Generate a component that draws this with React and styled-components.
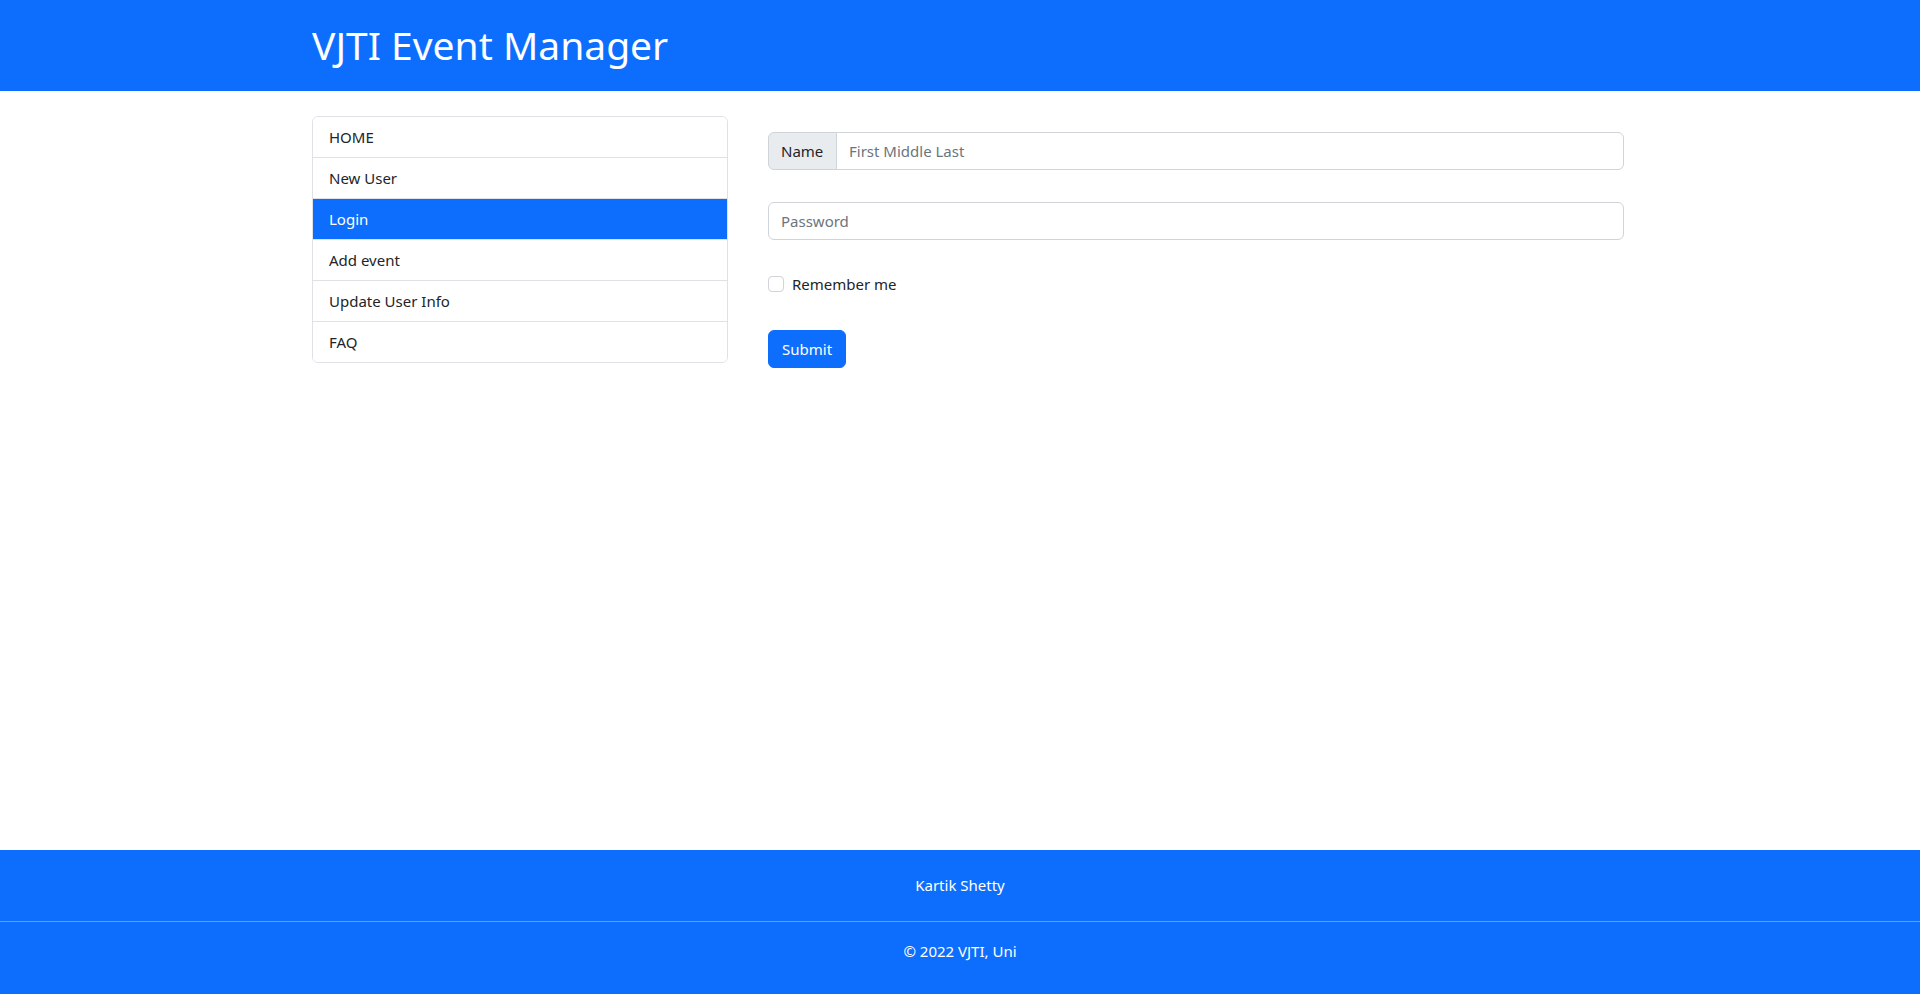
import React from "react";
import styled, { createGlobalStyle } from "styled-components";

const Global = createGlobalStyle`
  * { box-sizing: border-box; }
  html, body { margin: 0; padding: 0; }
  body {
    font-family: "Noto Sans", "Open Sans", sans-serif;
    font-size: 16px;
    line-height: 1.5;
    color: #212529;
    background: #fff;
  }
`;

const Page = styled.div`
  min-height: 100vh;
  display: flex;
  flex-direction: column;
`;

const Header = styled.header`
  background: #0d6efd;
  height: 91px;
  display: flex;
  align-items: center;
`;

const Container = styled.div`
  width: 1296px;
  margin: 0 auto;
`;

const Title = styled.h1`
  margin: 0;
  color: #fff;
  font-size: 39px;
  font-weight: 400;
  line-height: 1.2;
`;

const Main = styled.main`
  flex: 1;
  padding-top: 25px;
`;

const Row = styled.div`
  display: flex;
  gap: 40px;
  align-items: flex-start;
`;

const ListGroup = styled.ul`
  flex: none;
  list-style: none;
  margin: 0;
  padding: 0;
  width: 416px;
  border: 1px solid #dee2e6;
  border-radius: 6px;
  overflow: hidden;
`;

const ListItem = styled.li`
  padding: 8px 16px;
  font-size: 15px;
  line-height: 24px;
  background: ${(p) => (p.$active ? "#0d6efd" : "#fff")};
  color: ${(p) => (p.$active ? "#fff" : "#212529")};
  & + & { border-top: 1px solid #dee2e6; }
`;

const Form = styled.form`
  flex: none;
  width: 856px;
  padding-top: 16px;
  display: flex;
  flex-direction: column;
  align-items: flex-start;
`;

const InputGroup = styled.div`
  display: flex;
  width: 100%;
  height: 38px;
  margin-bottom: 32px;
`;

const Addon = styled.span`
  display: flex;
  align-items: center;
  padding: 0 12px;
  width: 69px;
  background: #e9ecef;
  border: 1px solid #ced4da;
  border-radius: 6px 0 0 6px;
  font-size: 15px;
  color: #212529;
`;

const Input = styled.input`
  flex: 1;
  height: 38px;
  width: 100%;
  padding: 6px 12px;
  font-family: inherit;
  font-size: 15px;
  color: #212529;
  border: 1px solid #ced4da;
  border-radius: ${(p) => (p.$joined ? "0 6px 6px 0" : "6px")};
  margin-left: ${(p) => (p.$joined ? "-1px" : "0")};
  outline: none;
  &::placeholder { color: #6c757d; }
`;

const CheckRow = styled.label`
  display: flex;
  align-items: center;
  gap: 8px;
  font-size: 15px;
  height: 24px;
  margin-bottom: 34px;
`;

const Check = styled.span`
  width: 16px;
  height: 16px;
  border: 1px solid #ced4da;
  border-radius: 4px;
  background: #fff;
`;

const Button = styled.button`
  height: 38px;
  padding: 6px 13px;
  background: #0d6efd;
  color: #fff;
  border: 1px solid #0d6efd;
  border-radius: 6px;
  font-family: inherit;
  font-size: 15px;
  line-height: 24px;
`;

const Footer = styled.footer`
  background: #0d6efd;
  color: #fff;
  font-size: 15px;
  text-align: center;
`;

const FooterTop = styled.div`
  height: 72px;
  display: flex;
  align-items: center;
  justify-content: center;
  border-bottom: 1px solid #0dcaf0;
`;

const FooterBottom = styled.div`
  height: 72px;
  padding-top: 18px;
`;

const items = ["HOME", "New User", "Login", "Add event", "Update User Info", "FAQ"];

export default function App() {
  return (
    <Page>
      <Global />
      <Header>
        <Container>
          <Title>VJTI Event Manager</Title>
        </Container>
      </Header>
      <Main>
        <Container>
          <Row>
            <ListGroup>
              {items.map((t) => (
                <ListItem key={t} $active={t === "Login"}>{t}</ListItem>
              ))}
            </ListGroup>
            <Form onSubmit={(e) => e.preventDefault()}>
              <InputGroup>
                <Addon>Name</Addon>
                <Input $joined placeholder="First Middle Last" />
              </InputGroup>
              <InputGroup>
                <Input type="password" placeholder="Password" />
              </InputGroup>
              <CheckRow>
                <Check />
                Remember me
              </CheckRow>
              <Button type="submit">Submit</Button>
            </Form>
          </Row>
        </Container>
      </Main>
      <Footer>
        <FooterTop>Kartik Shetty</FooterTop>
        <FooterBottom>© 2022 VJTI, Uni</FooterBottom>
      </Footer>
    </Page>
  );
}
